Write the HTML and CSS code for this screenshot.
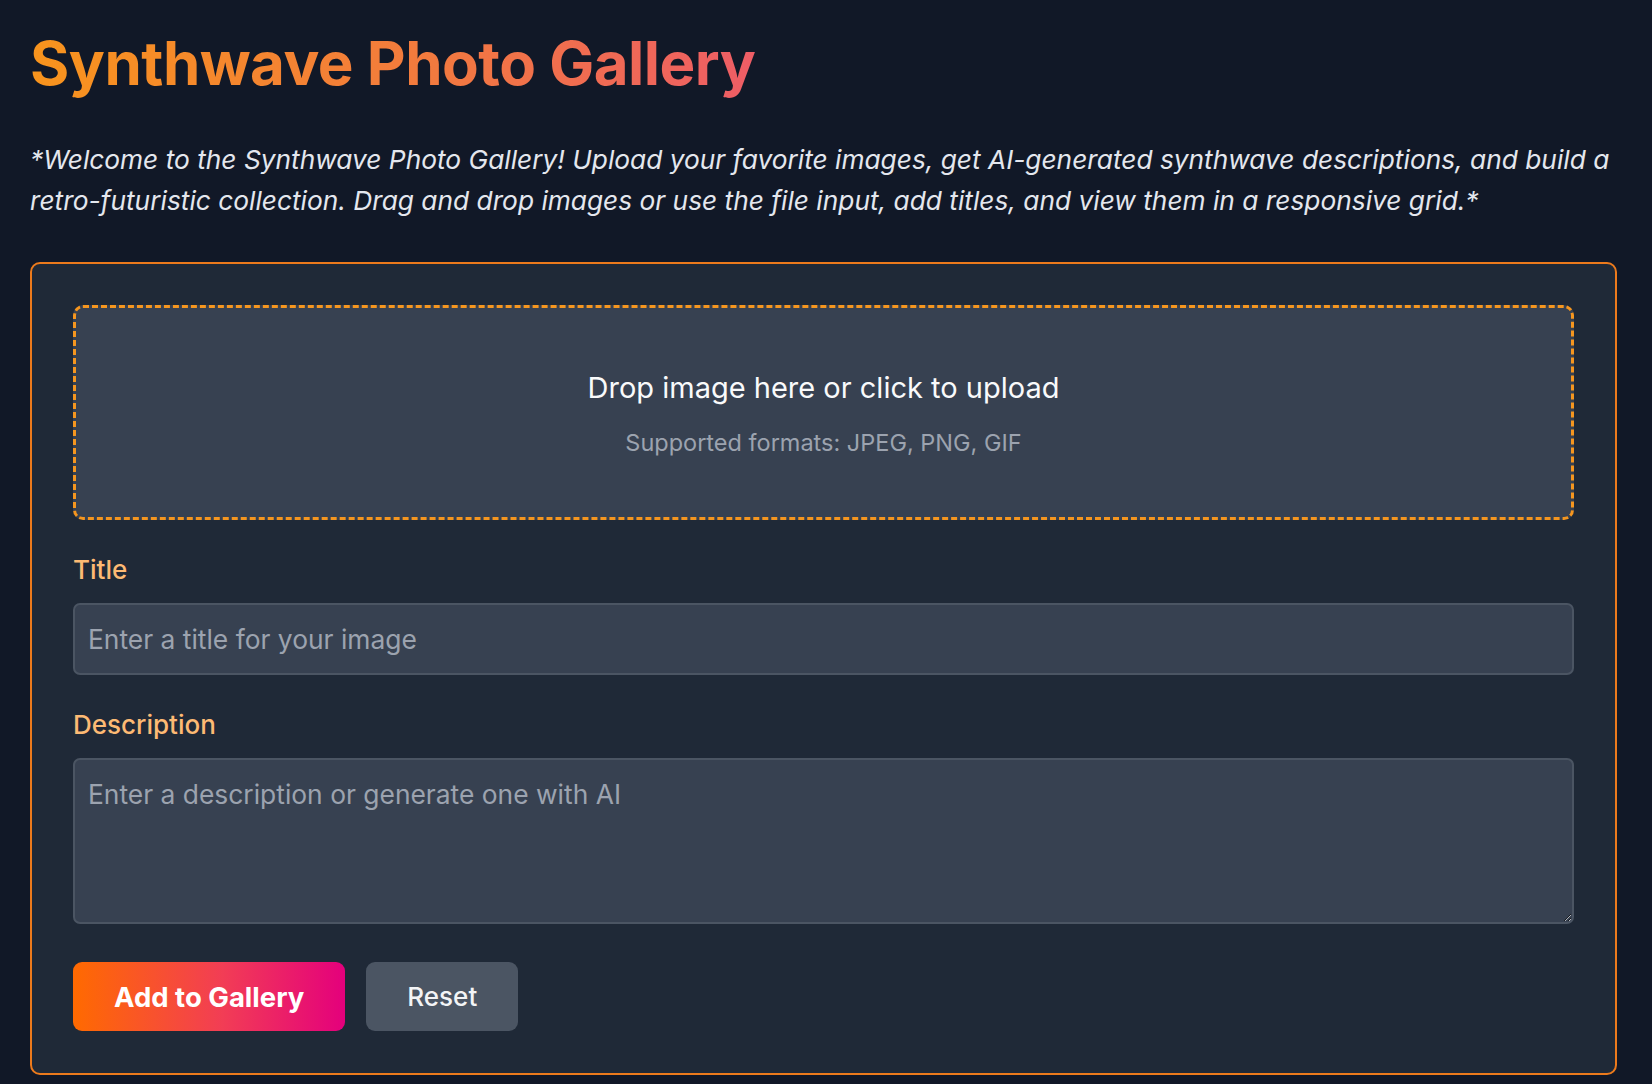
FILE: index.html
```html
<!DOCTYPE html>
<html lang="en">
<head>
<meta charset="utf-8">
<title>Synthwave Photo Gallery</title>
<link rel="stylesheet" href="styles.css">
</head>
<body>
<main class="page">
  <h1 class="title"><span class="title-text">Synthwave Photo Gallery</span></h1>
  <p class="intro">*Welcome to the Synthwave Photo Gallery! Upload your favorite images, get AI-generated synthwave descriptions, and build a retro-futuristic collection. Drag and drop images or use the file input, add titles, and view them in a responsive grid.*</p>
  <section class="panel">
    <div class="dropzone">
      <p class="drop-main">Drop image here or click to upload</p>
      <p class="drop-sub">Supported formats: JPEG, PNG, GIF</p>
    </div>
    <div class="field">
      <label class="label" for="title">Title</label>
      <input class="input" id="title" type="text" placeholder="Enter a title for your image">
    </div>
    <div class="field field-last">
      <label class="label" for="desc">Description</label>
      <textarea class="input textarea" id="desc" placeholder="Enter a description or generate one with AI"></textarea>
    </div>
    <div class="actions">
      <button class="btn btn-primary" type="button">Add to Gallery</button>
      <button class="btn btn-secondary" type="button">Reset</button>
    </div>
  </section>
</main>
</body>
</html>
```

FILE: styles.css
```css
* {
  box-sizing: border-box;
}

html, body {
  margin: 0;
  padding: 0;
  background: #111827;
}

body {
  font-family: Inter, "Noto Sans", "Liberation Sans", sans-serif;
  color: #e5e7eb;
}

.page {
  padding: 27px 35px 10px 30px;
}

.title {
  margin: 0;
  font-size: 60px;
  line-height: 72px;
  font-weight: 700;
  letter-spacing: -0.5px;
}

.title-text {
  display: inline-block;
  background: linear-gradient(90deg, #f8941d 0%, #f27a3e 55%, #ee5d66 100%);
  -webkit-background-clip: text;
  background-clip: text;
  color: transparent;
}

.intro {
  margin: 40px 0 0 0;
  font-size: 26.3px;
  line-height: 41px;
  font-style: italic;
  color: #e4e7ee;
}

.panel {
  margin-top: 41px;
  background: #1f2937;
  border: 2px solid #ec7a1c;
  border-radius: 10px;
  padding: 41px 41px 42px;
}

.dropzone {
  background: #374151;
  border: 3px dashed #f5961f;
  border-radius: 10px;
  padding: 62px 20px 59px;
  text-align: center;
  margin-bottom: 34px;
}

.drop-main {
  margin: 0 0 22px 0;
  font-size: 29px;
  line-height: 36px;
  color: #f9fafb;
}

.drop-sub {
  margin: 0;
  font-size: 23.5px;
  line-height: 30px;
  color: #9ca3af;
}

.field {
  margin-bottom: 34px;
}

.field-last {
  margin-bottom: 38px;
}

.label {
  display: block;
  margin-bottom: 17px;
  font-size: 26px;
  line-height: 32px;
  font-weight: 500;
  color: #fdba74;
}

.input {
  display: block;
  width: 100%;
  height: 72px;
  padding: 0 13px;
  background: #374151;
  border: 2px solid #4b5563;
  border-radius: 7px;
  font-family: inherit;
  font-size: 26.4px;
  color: #f3f4f6;
  outline: none;
}

.input::placeholder {
  color: #9ca3af;
}

.textarea {
  height: 166px;
  padding: 17px 13px;
  line-height: 34px;
  resize: vertical;
}

.actions {
  display: flex;
  gap: 21px;
}

.btn {
  height: 69px;
  padding: 0 41px;
  border: none;
  border-radius: 9px;
  font-family: inherit;
  font-size: 26px;
  color: #ffffff;
  cursor: pointer;
}

.btn-primary {
  background: linear-gradient(90deg, #ff6a00 0%, #f23d55 55%, #e4007c 100%);
  font-size: 27.5px;
  font-weight: 700;
}

.btn-secondary {
  background: #4b5563;
  font-weight: 500;
  color: #f3f4f6;
}
```
